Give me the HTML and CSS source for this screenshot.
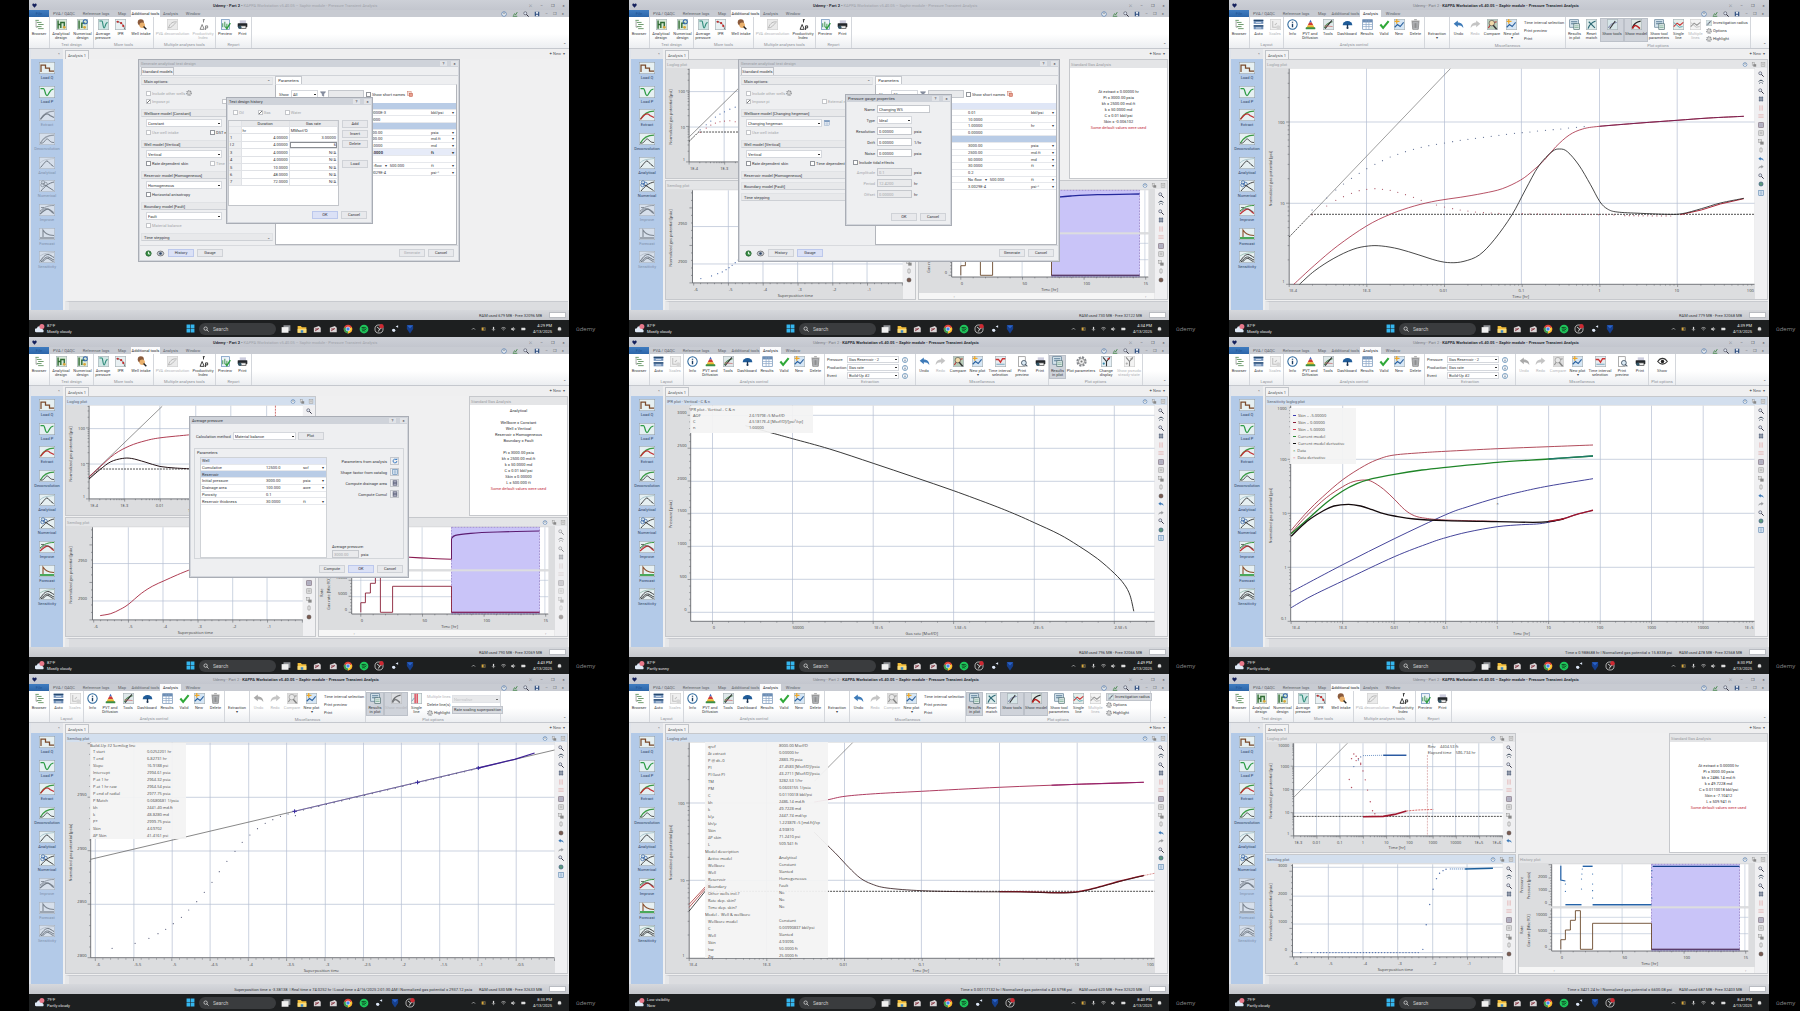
FILE: index.html
```html
<!DOCTYPE html>
<html lang="en">
<head>
<meta charset="utf-8">
<title>Pressure Transient Analysis - session overview</title>
<link rel="stylesheet" href="styles.css">
</head>
<body>
<main class="sheet" id="sheet"></main>
<script src="app.js"></script>
</body>
</html>
```
FILE: styles.css
```css
* { box-sizing: border-box; }
html, body { margin: 0; background: #000; }
body { font: 4px/5px Roboto, "Liberation Sans", sans-serif; color: #3a3d42; }
button, input, select { font: inherit; color: inherit; margin: 0; padding: 0; border: 0; background: none; }
button { white-space: nowrap; }
ul, dl, dd, h2, h3, p { margin: 0; padding: 0; list-style: none; font: inherit; }
svg { display: block; }

.sheet { display: grid; grid-template-columns: repeat(3, 1fr); grid-template-rows: repeat(3, 1fr); min-height: 100vh; }
.shot { display: flex; background: #000; padding-left: 29px; min-width: 0; }
.brand { width: 31px; align-self: flex-end; padding: 0 0 4px 7px; color: #8b8b8b; font: 6px/7px "Open Sans", sans-serif; }
.app { position: relative; flex: 1; min-width: 0; display: flex; flex-direction: column; background: #efeff0; }

.titlebar { position: relative; height: 10px; display: flex; align-items: center; justify-content: flex-end; gap: 6px; padding: 0 3px; background: linear-gradient(#cdd0d7, #c3c6ce); white-space: nowrap; }
.titlebar h2 { margin-right: auto; padding-left: 170px; color: #777a82; }
.titlebar h2 b { color: #2c2f37; }
.titlebar .dim b { color: #a0a3aa; font-weight: 400; }
.titlebar .dim { color: #2c2f37; font-weight: 700; }
.logo { width: 5px; height: 5px; color: #14205c; }
.winbtn { width: 5px; height: 5px; line-height: 5px; text-align: center; color: #4c5058; }

.tabs { height: 7px; display: flex; background: #c8cbd2; color: #5b5f67; }
.tabs button { height: 7px; line-height: 7px; }
.tabs .file { width: 20px; background: linear-gradient(#3f7cc0, #2c65a8); color: #1f5290; }
.tabs .on { background: #fbfbfc; color: #26282c; }
.tabs .quick { margin-left: auto; display: flex; align-items: center; gap: 5px; padding-right: 5px; }
.tabs .quick svg { width: 6px; height: 6px; }

.ribbon { height: 32px; display: flex; background: linear-gradient(#fff 55%, #eceef1); border-bottom: 1px solid #c5c8ce; }
.group { display: flex; flex-direction: column; border-right: 1px solid #d4d7dc; }
.group .items { display: flex; flex: 1; padding-top: 1px; }
.group h3 { height: 6px; text-align: center; color: #8f9298; white-space: nowrap; }
.tool { display: flex; flex-direction: column; align-items: center; line-height: 4px; height: 24px; padding-top: 1px; white-space: pre-line; text-align: center; color: #3a3c42; }
.tool svg { width: 11px; height: 11px; margin-bottom: 2px; }
.tool.off { color: #b4b6ba; }
.tool.off svg, .side .off svg { filter: grayscale(1); opacity: .6; }
.tool.hot { background: #cfd3da; border: 1px solid #bcc1c9; padding-top: 0; }
.w14 { width: 14px; } .w16 { width: 16px; } .w17 { width: 17px; } .w18 { width: 18px; } .w20 { width: 20px; }
.w21 { width: 21px; } .w22 { width: 22px; } .w24 { width: 24px; } .w26 { width: 26px; } .w30 { width: 30px; } .w37 { width: 37px; }
.stack { display: flex; flex-direction: column; align-items: flex-start; padding: 1px 0 0 2px; }
.stack button { height: 8px; line-height: 8px; display: flex; align-items: center; gap: 1px; color: #3a3c42; }
.stack svg { width: 6px; height: 6px; }
.stack.wide { width: 43px; } .stack.radius { width: 46px; } .stack.narrow { width: 25px; } .stack.scaling { width: 50px; gap: 3px; padding-top: 3px; }
.stack .off { color: #b4b6ba; }
.stack .pressed { background: #d8dbe0; border: 1px solid #c0c4cb; padding: 0 1px; }
.stack select { width: 48px; background-color: #dfe0e3; color: #a9abb0; }
.extract { width: 90px; padding: 1px 4px 0 2px; display: grid; grid-template-columns: 20px 52px auto; align-content: start; row-gap: 1px; align-items: center; }
.extract svg { width: 6px; height: 6px; justify-self: center; }
.extract select { height: 7px; }
.collapse { margin: auto 3px 1px auto; }

select { appearance: none; height: 8px; padding: 0 1px; border: 1px solid #d5d8dd; background: #fff; border-radius: 0; background-image: linear-gradient(#333, #333); background-repeat: no-repeat; background-size: 2px 1px; background-position: right 1px center; }
input[type=checkbox] { appearance: none; flex: none; width: 5px; height: 5px; border: 1px solid #92959b; background: #fff; }
input[type=checkbox]:disabled { border-color: #c4c6ca; }
input[type=checkbox]:checked { background: linear-gradient(135deg, #fff 35%, #777 35% 65%, #fff 65%); }
input[type=text] { height: 8px; border: 1px solid #c5c8cd; background: #fff; padding: 0 1px; min-width: 0; }
input[type=text]:disabled { background: #e9eaec; color: #a5a7ab; }

.body { flex: 1; display: flex; min-height: 0; }
.side { width: 34px; background: #b3cae8; border-left: 2px solid #dfe3ea; }
.side header { height: 10px; background: #e3e5e9; text-align: right; line-height: 10px; padding-right: 3px; }
.side li { height: 24px; }
.side li:nth-child(3n+2) { height: 23px; }
.side ul { padding-top: 3px; }
.side button { display: flex; flex-direction: column; align-items: center; width: 100%; color: #2c4264; line-height: 5px; }
.side .off { color: #7e90ab; }
.side svg { width: 16px; height: 12px; margin-bottom: 1px; }
.work { flex: 1; min-width: 0; padding: 0 1px 0 2px; display: flex; flex-direction: column; }
.docs { height: 10px; display: flex; justify-content: space-between; color: #5a5d63; padding-right: 3px; }
.docs button { height: 9px; margin-top: 1px; width: 24px; border: 1px solid #c2c5ca; border-bottom: 0; background: #f3f3f4; line-height: 7px; }
.docs span { line-height: 10px; }
.desk { flex: 1; display: flex; min-height: 0; background: #f0f0f1; }
.footline { height: 9px; margin-top: 1px; border-top: 1px solid #c8cacf; background: #dcdde0; border-left: 4px solid #e6e7e9; }
.status { height: 10px; display: flex; align-items: center; justify-content: flex-end; gap: 7px; padding-right: 3px; background: linear-gradient(#d6d8dc, #c6c8cd); color: #34363b; white-space: nowrap; }
.status meter { appearance: none; width: 17px; height: 6px; background: #fff; border: 1px solid #b9bcc2; }
.status meter::-webkit-meter-bar { display: none; }

.pane { display: flex; flex-direction: column; background: #dcdddf; border: 1px solid #c6c8cc; min-width: 0; min-height: 0; }
.pane > header { height: 8px; display: flex; align-items: center; justify-content: space-between; padding: 0 1px; background: #e4e5e7; color: #9a9ca1; line-height: 7px; }
.pane.active > header { background: #d3dfee; color: #59616d; }
.pane .ctl { display: flex; gap: 3px; }
.pane .ctl svg { width: 6px; height: 5px; }
.pane .view { flex: 1; display: flex; min-height: 0; }
.pane .canvas { position: relative; flex: 1; min-width: 0; }
.canvas > svg { width: 100%; height: auto; }
.strip { width: 12px; background: #f0f0f2; padding-top: 1px; flex: none; overflow: hidden; }
.strip li { height: 8px; display: grid; place-items: center; }
.strip li:nth-child(odd) { height: 9px; }
.strip svg { width: 6px; height: 6px; }
.strip.faded svg { opacity: .55; filter: grayscale(.7); }
.full { flex: 1; }
.quad { flex: 1; display: grid; grid-template-columns: 251px 2px 151px 1fr; grid-template-rows: 120px 1fr; row-gap: 1px; }
.quad .log { grid-area: 1 / 1; } .quad .semi { grid-area: 2 / 1; }
.quad .info { grid-area: 1 / 4; background: #fff; } .quad .hist { grid-area: 2 / 3 / auto / span 2; }
.info div { padding-top: 21px; text-align: center; line-height: 6px; color: #303236; white-space: pre-line; }
.info.tall div { padding-top: 3px; }
.info .warn { color: #c22a3c; }

.plot text { font: 4px "Open Sans", sans-serif; fill: #3d3f43; }
.plot .e { text-anchor: end; } .plot .m { text-anchor: middle; }
.g { stroke: #b4bfd2; } .ax { stroke: #55585d; } .tk { stroke: #66696e; }
.plot path { fill: none; }
.readout { position: absolute; background: #f3f3f3ee; font: 4px/7px "Open Sans", sans-serif; color: #4a4a4a; white-space: nowrap; overflow: hidden; }
.readout dl { display: grid; padding-left: 3px; }
.readout.ipr { left: 24px; top: 1px; width: 123px; height: 27px; }
.readout.ipr dl { grid-template-columns: 56px 1fr; line-height: 6px; }
.readout.semi { left: 24px; top: 1px; width: 96px; height: 96px; line-height: 5px; }
.readout.semi dl { grid-template-columns: 54px 1fr; line-height: 7px; }
.readout.model { left: 39px; top: 0; width: 123px; bottom: 15px; }
.readout.model dl { grid-template-columns: 71px 1fr; grid-auto-rows: 7px; }
.readout.model dt { padding-top: 1px; } .readout .head { grid-column: 1 / -1; margin-left: -3px; }
.readout.legend { left: 24px; top: 3px; width: 66px; height: 56px; padding: 4px 0 0 3px; }
.legend li { display: flex; align-items: center; gap: 2px; }
.legend i { width: 3px; height: 1px; background: currentColor; }
.legend span { color: #4a4a4a; }
.blue { color: #3b3bb0; } .wine { color: #8a2038; } .red { color: #d04050; } .green { color: #2c8a34; } .black { color: #111; }

.dialog { position: absolute; background: #eeeff1; border: 1px solid #a9adb5; box-shadow: inset 0 0 0 1px #d3d6dc; padding: 0 1px 1px; display: flex; flex-direction: column; color: #34363b; }
.dialog > header { height: 7px; display: flex; gap: 4px; align-items: center; background: #cfd3da; padding-left: 1px; flex: none; white-space: nowrap; }
.dialog > header h3 { margin-right: auto; }
.dialog.back > header h3 { color: #999ca2; }
.dialog > header button { width: 7px; height: 5px; line-height: 5px; background: #e1e3e7; }
.push { width: 26px; height: 8px; line-height: 6px; border: 1px solid #cfd2d7; background: #e8e9ec; text-align: center; }
.push.hot { background: #dbe1f6; border-color: #bcc8ec; }
.push:disabled { color: #a9abb0; }
.row { display: flex; align-items: center; height: 8px; gap: 2px; white-space: nowrap; }
label { display: flex; align-items: center; gap: 1px; white-space: nowrap; }
label.off { color: #a5a7ab; }
.design { left: 109px; top: 59px; width: 322px; height: 203px; }
.design .vtab { width: 33px; height: 8px; margin-left: 1px; border: 1px solid #bfc2c8; border-bottom: 0; line-height: 6px; flex: none; background: #f4f4f5; }
.design .cols { flex: 1; display: flex; gap: 2px; padding: 0 1px; border-top: 1px solid #d0d3d8; min-height: 0; }
.design .models { width: 132px; padding-top: 1px; }
.design .models h3 { height: 8px; line-height: 7px; padding: 0 2px; background: #e8e9eb; border: 1px solid #e0e2e5; border-bottom-color: #cdd0d5; display: flex; justify-content: space-between; }
.design section { padding-bottom: 3px; }
.design section > div { padding: 2px 3px 1px 5px; display: grid; row-gap: 1px; }
.design section:first-child > div { padding-top: 4px; row-gap: 0; }
.design section select { width: 76px; }
.design .models .row > label:first-child { width: 62px; }
.design .row .second { margin-left: 12px; }
.design .row svg { width: 6px; height: 6px; }
.params { flex: 1; display: flex; flex-direction: column; }
.params > button { width: 27px; height: 8px; background: #fff; border: 1px solid #c5c8cd; border-bottom: 0; line-height: 6px; }
.params .sheetbox { flex: 1; background: #fff; border: 1px solid #b3b6bc; border-top-color: #e2e4e8; min-height: 0; }
.params .row { height: 18px; padding-left: 3px; }
.params .row select { width: 27px; } .params .row input[type=text] { width: 36px; }
table { border-collapse: collapse; table-layout: fixed; width: 100%; }
th, td { padding: 0 1px; text-align: left; font-weight: 400; line-height: 5px; border-bottom: 1px solid #e6e8ec; overflow: hidden; white-space: nowrap; }
.params table.eleven { height: 73px; } .params table.thirteen { height: 87px; }
.c-name { width: 91px; } .c-unit { width: 21px; } .c-drop { width: 5px; }
.band td, .band th { background: #b9cce6; } .pale td, .pale th { background: #dfe6f6; } .strong td { font-weight: 700; background: #e6ebf8; }
.design footer { height: 15px; display: flex; align-items: center; gap: 3px; padding: 0 4px; border-top: 1px solid #d8dade; }
.design footer svg { width: 9px; height: 7px; }
.design footer .gap { margin-left: auto; }

.history { left: 197px; top: 97px; width: 147px; height: 127px; }
.history .row { height: 15px; padding-left: 5px; gap: 14px; flex: none; }
.history .grid2 { display: flex; gap: 3px; height: 86px; }
.history .box { width: 111px; background: #fff; border: 1px solid #c2c5ca; }
.history table { height: 65px; }
.history td, .history th { border: 1px solid #e0e2e6; border-width: 0 1px 1px 0; text-align: right; }
.history thead th { text-align: center; background: #e8e9eb; }
.history th:first-child { width: 12px; text-align: left; background: #eeeff1; }
.history .units td { text-align: left; }
.history .edit { box-shadow: inset 0 0 0 1px #8a8d92; }
.history .col { display: flex; flex-direction: column; gap: 2px; }
.history .col button:last-child { margin-top: 10px; }
.history > footer, .gauge > footer, .average > footer { margin-top: auto; display: flex; justify-content: flex-end; gap: 3px; padding: 0 4px 3px; }
.gauge { left: 216px; top: 94px; width: 107px; height: 132px; }
.gauge .fields { display: grid; grid-template-columns: 28px 35px 1fr; gap: 3px 2px; padding-top: 3px; align-items: center; }
.gauge .fields label { justify-self: end; }
.gauge .fields .name { grid-column: 2 / 4; width: 53px; }
.gauge .fields .tick { grid-column: 1 / 4; justify-self: start; padding-left: 6px; height: 5px; }
.average { left: 160px; top: 79px; width: 220px; height: 162px; }
.average .calc { height: 24px; padding-left: 5px; flex: none; }
.average .calc select { width: 63px; }
.average fieldset { margin: 0 3px; border: 1px solid #d3d6da; padding: 8px 4px 0 5px; min-width: 0; position: relative; }
.average .inner { display: flex; gap: 5px; height: 101px; }
.average legend { position: absolute; left: 2px; top: 1px; padding: 0; }
.average .box { width: 127px; background: #fff; border: 1px solid #cfd2d6; flex: none; }
.average table { height: 47px; }
.average .c-name { width: 64px; } .average .c-val { width: 37px; }
.average .acts { flex: 1; display: flex; flex-direction: column; gap: 3px; }
.average .acts p { display: flex; justify-content: flex-end; align-items: center; gap: 3px; height: 8px; white-space: nowrap; }
.average .acts button { width: 9px; height: 8px; border: 1px solid #c5c8cd; display: grid; place-items: center; }
.average .acts svg { width: 6px; height: 6px; }
.average .acts .out { margin-top: auto; display: grid; gap: 1px; }
.average .acts .out input { width: 27px; }

.taskbar { height: 17px; display: flex; align-items: center; background: #1d1f20; color: #e4e4e4; padding: 0 7px 0 6px; }
.weather { width: 151px; display: flex; gap: 2px; line-height: 6px; white-space: pre-line; }
.weather svg { width: 10px; height: 12px; }
.start { width: 9px; height: 9px; margin-right: 4px; }
.find { width: 77px; height: 12px; border-radius: 6px; background: #3a3c3e; display: flex; align-items: center; gap: 3px; padding-left: 4px; }
.find svg { width: 6px; height: 6px; }
.find input[type=text] { width: 60px; height: 10px; border: 0; background: none; font-size: 5px; }
.find input::placeholder { color: #c8c8c8; opacity: 1; }
.pins { width: 134px; margin-left: 5px; display: flex; justify-content: space-between; }
.pins svg { width: 10px; height: 10px; }
.tray { margin-left: auto; display: flex; align-items: center; gap: 5px; }
.tray svg { width: 5px; height: 6px; }
.tray time { text-align: right; line-height: 6px; white-space: pre-line; margin-left: 2px; }
```
FILE: app.js
```js
const X = v => Math.round(v / 2.6133 * 10) / 10;
const Y = v => Math.round(v / 3 * 10) / 10;

/* ---------- icons ---------- */
const box = (c = '#e8f0f2') => `<rect x=".5" y=".5" width="15" height="15" fill="${c}" stroke="#a9b4b8"/>`;
const ICONS = {
  browser: '<path d="M2 2h5M4 5h7M6 8h8M4 11h7M6 14h8" stroke="#6b9a6b" stroke-width="1.4"/><path d="M3 3v9h2" fill="none" stroke="#888"/>',
  anadesign: box('#d9ead9') + '<path d="M3 2v12M7 13V5h6M12 5v8M3 8h5" fill="none" stroke="#2e6a32" stroke-width="2"/><circle cx="12" cy="12" r="2" fill="#d9a53b"/>',
  numdesign: box('#d9ead9') + '<path d="M3 2v12M7 13V6h5" fill="none" stroke="#2e6a32" stroke-width="2"/><circle cx="12" cy="4" r="3" fill="none" stroke="#3568b0" stroke-width="1.5"/><circle cx="11" cy="12" r="2" fill="#d9a53b"/>',
  avg: box('#cfe6e4') + '<path d="M2 3h4c1 0 1 10 3 10s1-8 5-8" fill="none" stroke="#2d8a78" stroke-width="1.6"/>',
  ipr: box() + '<path d="M2 4c7 0 11 4 12 11" fill="none" stroke="#444"/><g fill="#c22c2c"><circle cx="4" cy="4" r="1.6"/><circle cx="9" cy="6" r="1.6"/><circle cx="12" cy="10" r="1.6"/></g>',
  intake: '<circle cx="7" cy="5" r="4.5" fill="#8a5a3c"/><circle cx="9" cy="9" r="4" fill="#e9b06c"/><path d="M11 11l4 4" stroke="#222" stroke-width="2"/>',
  deconv: box('#ddd') + '<path d="M2 13c3-8 7-9 12-9M2 13c5 0 7-4 11-8" fill="none" stroke="#888" stroke-width="1.4"/>',
  prod: '<path d="M7 1h3M8 1v4M3 15l3-7 3 7zM11 10v6M11 10h3v3h-3" fill="none" stroke="#333" stroke-width="1.4"/>',
  preview: '<rect x="2" y="1" width="12" height="14" fill="#eef4fa" stroke="#5e87b5"/><path d="M4 12V6M7 12V4M10 12V7" stroke="#4a9a5a" stroke-width="1.5"/><path d="M8 11l2 3 5-8" fill="none" stroke="#2b9b3c" stroke-width="2"/>',
  print: '<rect x="4" y="2" width="9" height="5" fill="#ccd"/><rect x="1" y="6" width="14" height="6" rx="1" fill="#23262b"/><rect x="5" y="10" width="8" height="4" fill="#eee" stroke="#444"/><circle cx="4" cy="12" r="2.5" fill="#356"/>',
  auto: '<rect x="1" y="1" width="14" height="6" fill="#6f8fb8"/><rect x="1" y="9" width="14" height="6" fill="#6f8fb8"/><path d="M1 2h14M1 10h14" stroke="#27496f" stroke-width="2"/><path d="M4 5h8M4 13h8" stroke="#fff"/>',
  scales: box('#e6e6e6') + '<path d="M4 3v9h9M7 9l3-3" fill="none" stroke="#999" stroke-width="1.5"/><circle cx="12" cy="12" r="3" fill="#bbb"/>',
  info: '<circle cx="8" cy="8" r="6.8" fill="#fff" stroke="#27649a" stroke-width="1.5"/><path d="M8 7v5M8 4v1.6" stroke="#1d3f66" stroke-width="2"/>',
  pvt: '<path d="M8 1l2 4H6z" fill="#3f62b8"/><path d="M6 5h4l2 4H4z" fill="#d23c34"/><path d="M4 9h8l2 4H2z" fill="#e9b62f"/><rect x="1" y="12" width="14" height="3" rx="1" fill="#3c8f46"/>',
  tools: box('#dfe8ea') + '<path d="M2 13C4 8 8 5 14 4" fill="none" stroke="#4a8a50" stroke-width="1.5"/><path d="M3 14L13 2" stroke="#333" stroke-width="1.6"/><path d="M2 10l12 1" stroke="#c66"/>',
  dash: '<path d="M1 9a7 6 0 0 1 14 0z" fill="#1f5b98"/><path d="M8 8v5" stroke="#1c3554" stroke-width="2"/><circle cx="8" cy="13" r="1.5" fill="#1c3554"/>',
  table: '<rect x="1" y="1" width="14" height="14" fill="#fff" stroke="#6c8db4"/><rect x="1" y="1" width="14" height="4" fill="#6c8db4"/><path d="M1 8h14M1 11h14M6 1v14M10 1v14" stroke="#8ba6c6"/>',
  calc: '<rect x="2" y="1" width="12" height="14" fill="#5a5f78"/><path d="M4 4h8M4 8h8M4 12h8" stroke="#dde" stroke-width="1.500"/>',
  valid: '<path d="M2 8l4 5 8-10" fill="none" stroke="#2fa838" stroke-width="3"/>',
  newp: box('#d6e6f4') + '<path d="M1 12l4-4 4 3 5-6" fill="none" stroke="#2b62a0" stroke-width="1.6"/><path d="M4 0v7M1 3.500h7" stroke="#eea82a" stroke-width="1.800"/>',
  del: '<path d="M3 4h10l-1 11H4z" fill="#bcbec2" stroke="#777"/><path d="M2 3h12M6 1h4M6 6v7M8 6v7M10 6v7" stroke="#777"/>',
  none: '',
  undo: '<path d="M1 7l6-5v3c5 0 8 3 8 8-2-3-4-4-8-4v3z" fill="#3d7ab8"/>',
  redo: '<path d="M15 7L9 2v3c-5 0-8 3-8 8 2-3 4-4 8-4v3z" fill="#9b9da1"/>',
  compare: box('#b9cdb9') + '<path d="M2 13c3-6 6-8 12-9" fill="none" stroke="#b33" stroke-width="1.5"/><circle cx="7" cy="6" r="4" fill="#f0d9a8" stroke="#555"/><path d="M9 9l5 6" stroke="#333" stroke-width="2"/>',
  results: '<rect x="1" y="1" width="13" height="11" fill="#d5e4ec" stroke="#5f7d94"/><path d="M3 4h9M3 7h9" stroke="#5a7c96" stroke-width="1.5"/><rect x="7" y="7" width="8" height="8" fill="#eef3f5" stroke="#4a6b6b"/><path d="M8 10h6M8 12.500h6" stroke="#5a9a78"/>',
  reset: box('#dcebea') + '<path d="M3 14C5 8 8 5 14 3M4 4l9 9" fill="none" stroke="#2f6a76" stroke-width="1.6"/>',
  showt: box('#d6e6e8') + '<path d="M2 13C4 8 8 6 14 5" fill="none" stroke="#669" stroke-width="1.2"/><path d="M4 14l8-11" stroke="#333" stroke-width="1.5"/>',
  showm: box('#dfe8e4') + '<path d="M2 13C4 6 8 4 14 3" fill="none" stroke="#222" stroke-width="2"/><path d="M2 14c3-7 6-5 11 0" fill="none" stroke="#b22" stroke-width="2.200"/>',
  single: box('#e6eeea') + '<path d="M1 11l5-5 4 3 5-4" fill="none" stroke="#c33" stroke-width="1.6"/><path d="M1 5l8 7 5-1" fill="none" stroke="#49a" stroke-width="1.2"/>',
  vline: box('#e9f2ee') + '<path d="M6 1v14M9 1v14" stroke="#d45" stroke-width="2"/><path d="M1 12l4-5" stroke="#48a"/>',
  timesel: box('#e7ecf0') + '<path d="M1 5h4l3 4 3-5h4" fill="none" stroke="#c33" stroke-width="2"/><path d="M2 12h12" stroke="#48a"/>',
  ppreview: '<rect x="2" y="1" width="10" height="14" fill="#fff" stroke="#888"/><circle cx="10" cy="10" r="3.5" fill="#dcebf6" stroke="#456" stroke-width="1.3"/><path d="M12 12l3 3" stroke="#456" stroke-width="1.500"/>',
  gear: '<circle cx="8" cy="8" r="6" fill="none" stroke="#85888e" stroke-width="3" stroke-dasharray="3 1.700"/><circle cx="8" cy="8" r="4.500" fill="#eee" stroke="#777"/><circle cx="8" cy="8" r="1.500" fill="#777"/>',
  change: box('#e4eef4') + '<path d="M3 2l5 6 5-6M8 8v7" fill="none" stroke="#333" stroke-width="1.6"/><circle cx="11" cy="4" r="1.600" fill="#c33"/><circle cx="4" cy="11" r="1.600" fill="#38a"/>',
  eye: '<path d="M1 8c4-6 10-6 14 0-4 5-10 5-14 0z" fill="#fff" stroke="#333" stroke-width="1.6"/><circle cx="8" cy="8" r="2.500" fill="#222"/>',
  mag: '<circle cx="6" cy="6" r="4" fill="#dfe8f2" stroke="#556" stroke-width="1.8"/><path d="M9 9l6 6" stroke="#223" stroke-width="2.500"/>',
  hand: '<path d="M2 7c2-5 10-5 12 0M4 12l2-3M12 12l-2-3" fill="none" stroke="#345" stroke-width="2.600"/>',
  arrows: '<path d="M5 1v14M11 1v14M2 5h12M2 11h12" stroke="#223656" stroke-width="1.800"/>',
  vred: '<path d="M5 1v14M11 1v14" stroke="#d99" stroke-width="1.800"/>',
  hred: '<path d="M1 5h14M1 11h14" stroke="#d99" stroke-width="1.800"/>',
  sq: '<rect x="2" y="2" width="12" height="12" fill="#ccd" stroke="#767" stroke-width="2"/><path d="M8 2v12M2 8h12" stroke="#778"/>',
  sq2: '<rect x="2" y="2" width="12" height="12" fill="#ddd" stroke="#999" stroke-width="1.500"/><path d="M5 6h6M5 9h6" stroke="#888"/>',
  copy: '<rect x="2" y="2" width="8" height="8" fill="#ddd" stroke="#777"/><rect x="6" y="7" width="9" height="8" fill="#888"/>',
  copyred: '<rect x="1" y="1" width="10" height="11" fill="#f6dcd4" stroke="#c0604a"/><rect x="6" y="6" width="9" height="9" fill="#e8a090" stroke="#b0402c"/>',
  funnel: '<path d="M1 2h14l-5 6v6l-4-2V8z" fill="#8c93a4" stroke="#4f5870"/>',
  pin: '<rect x="5" y="2" width="6" height="12" rx="3" fill="#eee" stroke="#888" stroke-width="1.500"/>',
  ball: '<circle cx="8" cy="8" r="5.500" fill="#7a5a50" stroke="#333"/>',
  globe: '<circle cx="8" cy="8" r="5.500" fill="#5c9a7c" stroke="#2a4a7a" stroke-width="1.500"/>',
  page: '<rect x="2" y="1" width="12" height="14" fill="#dce8f4" stroke="#4a7aaa" stroke-width="1.500"/><path d="M5 5h6M5 8h6M5 11h6" stroke="#4a7aaa"/>',
  help: '<circle cx="8" cy="8" r="6" fill="#fff" stroke="#3d6da5" stroke-width="1.800"/><path d="M8 4v5" stroke="#234" stroke-width="2"/>',
  save: '<path d="M2 2h12v12H2z" fill="#2b4a7c"/><path d="M5 2h6v5H5zM5 10h6v4H5z" fill="#dfe6f0"/>',
  chart: '<path d="M2 14h12M4 12l3-5 3 3 4-7" fill="none" stroke="#4b8a50" stroke-width="2.500"/>',
  heart: '<path d="M8 15L1 7c-1-5 5-7 7-3 2-4 8-2 7 3z" fill="#14205c"/>',
  recycle: '<circle cx="8" cy="8" r="6" fill="#3b9447" stroke="#1e5c28" stroke-width="2"/><path d="M8 4v5h4" fill="none" stroke="#fff" stroke-width="2"/>',
  refresh: '<path d="M13 8a5 5 0 1 1-2-4" fill="none" stroke="#3a7ac0" stroke-width="2.500"/><path d="M9 5h5V0z" fill="#3a7ac0"/>',
  cam: '<ellipse cx="8" cy="8" rx="7.500" ry="5.500" fill="#c9cdd4" stroke="#555" stroke-width="1.500"/><circle cx="8" cy="8" r="3" fill="#2f4668"/>',
  win: '<path d="M1 1h6.500v6.500H1zM8.500 1H15v6.500H8.500zM1 8.500h6.500V15H1zM8.500 8.500H15V15H8.500z" fill="#35b6ee"/>',
  weather: '<path d="M2 13a3 3 0 0 1 1-6 4 4 0 0 1 8 1 3 3 0 0 1 2 5z" fill="#dfe9f6"/><circle cx="11" cy="4" r="4" fill="#e8788a"/>',
  desk2: '<rect x="4" y="2" width="11" height="9" fill="#8d9094"/><rect x="1" y="5" width="11" height="9" fill="#f0f0f0"/>',
  folder: '<path d="M1 3h5l2 2h7v9H1z" fill="#f2bd3a"/><path d="M1 8h14v6H1z" fill="#f9dc7c"/><rect x="6" y="10" width="4" height="4" fill="#3a87c8"/>',
  pdf: '<path d="M3 6l8-3 3 3v7H3z" fill="#d9d4d6"/><path d="M5 11l6-4M5 8h5" stroke="#8a3a44" stroke-width="1.600"/>',
  chrome: '<circle cx="8" cy="8" r="7" fill="#e2443a"/><path d="M8 8L2 5a7 7 0 0 0 6 10z" fill="#33a250"/><path d="M8 8v7a7 7 0 0 0 6-10z" fill="#f5c32c"/><circle cx="8" cy="8" r="3.200" fill="#4486ee" stroke="#fff"/>',
  spotify: '<circle cx="8" cy="8" r="7" fill="#1fc75c"/><path d="M4 6c3-1 6-1 8 1M4.500 8.500c2-1 5-1 7 1M5 11c2-.6 4-.4 5 .6" fill="none" stroke="#0c2c16" stroke-width="1.300"/>',
  obs: '<circle cx="8" cy="8" r="6.500" fill="#222" stroke="#ddd" stroke-width="1.200"/><path d="M5 5l4 3-2 4M9 8l3-1" stroke="#ddd" fill="none" stroke-width="1.500"/><circle cx="12" cy="3.500" r="3.500" fill="#cf2a33"/>',
  kappa: '<path d="M3 9l3-1 1 5zM9 4l4-2v4z" fill="#dfe9f8"/><circle cx="6" cy="10" r="2.500" fill="#dfe9f8"/>',
  saphir: '<path d="M3 2h10v6l-5 7-5-7z" fill="#163f8c"/><path d="M3 2h10l-5 5z" fill="#2a62c8"/>',
  up: '<path d="M3 10l5-5 5 5" fill="none" stroke="#ddd" stroke-width="2"/>',
  shield: '<path d="M2 3h12v10H2z" fill="#d8a83a"/><path d="M8 3h6v10H8z" fill="#444"/>',
  mic: '<rect x="6" y="1" width="4" height="9" rx="2" fill="#ddd"/><path d="M3 8c1 5 9 5 10 0M8 12v3" fill="none" stroke="#ddd" stroke-width="1.500"/>',
  wifi: '<path d="M1 6c4-4 10-4 14 0M4 9c2-2 6-2 8 0M7 12h2" fill="none" stroke="#ddd" stroke-width="2"/>',
  vol: '<path d="M1 6h3l4-4v12l-4-4H1zM11 5c2 2 2 4 0 6" fill="#ddd" stroke="#ddd"/>',
  bat: '<rect x="1" y="4" width="12" height="8" fill="#ddd"/><path d="M14 6v4" stroke="#ddd" stroke-width="2"/>',
  bell: '<path d="M3 12V7c0-6 10-6 10 0v5zM6 14h4" fill="#ddd" stroke="#ddd"/>',
  search: '<circle cx="7" cy="7" r="4.500" fill="none" stroke="#ddd" stroke-width="2"/><path d="M10 10l5 5" stroke="#ddd" stroke-width="2"/>'
};
const ic = n => `<svg viewBox="0 0 16 16" aria-hidden="true">${ICONS[n]}</svg>`;

const SIDE = [
  ['Load Q', '<path d="M4 20V6h9v6h8v6h9" fill="none" stroke="#7b4a2c" stroke-width="2.500"/>'],
  ['Load P', '<path d="M3 5h6c3 0 3 14 7 14s4-12 13-13" fill="none" stroke="#2e9c46" stroke-width="2.500"/>'],
  ['Extract', '<path d="M3 20C9 10 18 4 30 4" fill="none" stroke="#3a9a44" stroke-width="2.500"/><path d="M3 21C12 8 17 8 22 13l8 4" fill="none" stroke="#c22f34" stroke-width="2.500"/>'],
  ['Deconvolution', '<path d="M3 20C9 8 18 4 30 4" fill="none" stroke="#3a9a44" stroke-width="2.500"/><path d="M2 20c9 3 11-10 15-8s6 8 13 7" fill="none" stroke="#444" stroke-width="1.800"/>'],
  ['Analytical', '<path d="M2 12C9 4 18 5 30 3" fill="none" stroke="#9bbcc4" stroke-width="1.500"/><path d="M3 21c8-9 10-13 13-13s5 6 13 11" fill="none" stroke="#3a3c3e" stroke-width="2"/>'],
  ['Numerical', '<g fill="none" stroke="#3c68a8" stroke-width="1.500"><circle cx="8" cy="5" r="3.500"/><circle cx="13" cy="8" r="3.500"/><circle cx="7" cy="10" r="3.500"/></g><path d="M4 22C12 12 20 6 30 4M12 10l17 11" fill="none" stroke="#444" stroke-width="2"/>'],
  ['Improve', '<path d="M2 14C10 6 18 3 30 3" fill="none" stroke="#3a9a44" stroke-width="2"/><path d="M2 20c8-8 12-10 16-10s6 6 12 9" fill="none" stroke="#c22f34" stroke-width="2.500"/><path d="M3 16c8-10 14-8 26 0M4 7h6" fill="none" stroke="#444" stroke-width="1.500"/>'],
  ['Forecast', '<path d="M8 19V4c4 6 8 10 22 11" fill="none" stroke="#8a4f2c" stroke-width="2.200"/><path d="M2 20h28" stroke="#49a85a" stroke-width="4"/>'],
  ['Sensitivity', '<path d="M2 21C10 9 14 7 18 7s8 4 12 6M4 22c8-10 11-10 14-10s8 5 12 6M7 22c6-7 8-7 11-7s6 5 11 6" fill="none" stroke="#3a3c3e" stroke-width="2"/><path d="M2 10C10 4 18 4 30 3" fill="none" stroke="#7a9" stroke-width="1.200"/>']
];
const side = off => SIDE.map(([n, p], i) => `<li><button class="${off.includes(i) ? 'off' : ''}"><svg viewBox="0 0 32 24" aria-hidden="true"><rect x=".5" y=".5" width="31" height="23" fill="#e6f0f2" stroke="#8f9aa2"/>${p}</svg>${n}</button></li>`).join('');

/* ---------- ribbon ---------- */
const tool = (n, icon, w, cls = '') => `<button class="tool w${w} ${cls}">${ic(icon)}${n}</button>`;
const group = (name, html) => `<div class="group"><div class="items">${html}</div><h3>${name}</h3></div>`;
const sel = (opts, label, attr = '') => `<select aria-label="${label}" ${attr}><option>${opts}</option></select>`;
const browser = group('', tool('Browser', 'browser', 20));

function toolsRibbon(prodOff) {
  return browser +
    group('Test design', tool('Analytical\ndesign', 'anadesign', 22) + tool('Numerical\ndesign', 'numdesign', 21)) +
    group('More tools', tool('Average\npressure', 'avg', 18) + tool('IPR', 'ipr', 17) + tool('Well intake', 'intake', 24)) +
    group('Multiple analyses tools', tool('PVA deconvolution', 'deconv', 37, 'off') + tool('Productivity\nIndex', 'prod', 24, prodOff ? 'off' : '')) +
    group('Report', tool('Preview', 'preview', 18) + tool('Print', 'print', 17));
}
const analysisHead = browser +
  group('Layout', tool('Auto', 'auto', 17) + tool('Scales', 'scales', 16, 'off')) +
  group('Analysis control', tool('Info', 'info', 17) + tool('PVT and\nDiffusion', 'pvt', 18) + tool('Tools', 'tools', 18) + tool('Dashboard', 'dash', 20) + tool('Results', 'table', 20) + tool('Valid', 'valid', 14) + tool('New', 'newp', 16) + tool('Delete', 'del', 17));
const miscShort = cmp => group('', tool('Extraction\n▾', 'none', 24)) +
  group('Miscellaneous', tool('Undo', 'undo', 17, cmp === 2 ? 'off' : '') + tool('Redo', 'redo', 16, 'off') + tool('Compare', 'compare', 18, cmp ? 'off' : '') + tool('New plot\n▾', 'newp', 21) +
    '<div class="stack wide"><button>Time interval selection</button><button>Print preview</button><button>Print</button></div>');
const extraction = group('Extraction', `<div class="extract">
  <span>Pressure</span>${sel('Gas Reservoir - 2', 'Pressure')}${ic('info')}
  <span>Production</span>${sel('Gas rate', 'Production')}${ic('info')}
  <span>Event</span>${sel('Build-Up #2', 'Event')}${ic('info')}</div>`);
const miscLong = off => group('Miscellaneous', tool('Undo', 'undo', 16, off) + tool('Redo', 'redo', 17, 'off') + tool('Compare', 'compare', 18, off) + tool('New plot\n▾', 'newp', 21) + tool('Time interval\nselection', 'timesel', 24) + tool('Print\npreview', 'ppreview', 20) + tool('Print', 'print', 16));
const loglogRibbon = (hot, cmp) => analysisHead + miscShort(cmp) + group('Plot options',
  tool('Results\nin plot', 'results', 17, hot) + tool('Reset\nmatch', 'reset', 17) + tool('Show tools', 'showt', 24, 'hot') + tool('Show model', 'showm', 24, 'hot') + tool('Show tool\nparameters', 'results', 22) + tool('Single\nline', 'single', 17) + tool('Multiple\nlines', 'single', 17, 'off') +
  `<div class="stack radius"><button class="${hot ? 'pressed' : ''}">${ic('showt')}Investigation radius</button><button>${ic('gear')}Options</button><button>${ic('gear')}Highlight</button></div>`);
const iprRibbon = analysisHead + extraction + miscLong('') + group('Plot options', tool('Results\nin plot', 'results', 17, 'hot') + tool('Plot parameters', 'gear', 30) + tool('Change\ndisplay', 'change', 20) + tool('Show pseudo\nsteady-state', 'change', 26, 'off'));
const sensRibbon = analysisHead + extraction + miscLong('off') + group('Plot options', tool('Show', 'eye', 26));
const semiRibbon = analysisHead + miscShort(2) + group('Plot options', tool('Results\nin plot', 'results', 18, 'hot') + tool('Show model', 'showm', 24, 'hot off') + tool('Single\nline', 'vline', 17) +
  `<div class="stack narrow"><button class="off">Multiple lines</button><button>Delete line(s)</button><button>${ic('gear')}Highlight</button></div><div class="stack scaling">${sel('Normalise', 'Normalise', 'disabled')}<button class="pressed">Rate scaling superposition</button></div>`);

/* ---------- plots ---------- */
const smooth = pts => {
  const p = pts.map(([a, b]) => [X(a), Y(b)]);
  let d = `M${p[0]}`;
  for (let i = 0; i < p.length - 1; i++) {
    const a = p[i - 1] || p[i], b = p[i], c = p[i + 1], e = p[i + 2] || c;
    const k = (m, n, q, s) => (m + (q - n) / 6 * s).toFixed(2);
    d += `C${k(b[0], a[0], c[0], 1)} ${k(b[1], a[1], c[1], 1)} ${k(c[0], b[0], e[0], -1)} ${k(c[1], b[1], e[1], -1)} ${c}`;
  }
  return d;
};
const pairs = s => s.trim().split(/\s+/).map(t => t.split(',').map(Number));
const curve = (s, col, w = 0.8) => `<path d="${smooth(pairs(s))}" stroke="${col}" stroke-width="${w}"/>`;
const poly = (s, col, w = 0.8, dash = '') => `<path d="M${pairs(s).map(([a, b]) => X(a) + ' ' + Y(b)).join('L')}" stroke="${col}" stroke-dasharray="${dash}" stroke-width="${w}"/>`;
const dots = (s, col, r = 0.6) => pairs(s).map(([a, b]) => `<circle cx="${X(a)}" cy="${Y(b)}" r="${r}" fill="${col}"/>`).join('');
const run = (x0, y0, x1, y1, step) => { let s = ''; for (let x = x0; x <= x1; x += step) s += `${x},${y0 + (y1 - y0) * (x - x0) / (x1 - x0)} `; return s; };
const txt = (x, y, t, c = 'm') => `<text class="${c}" x="${X(x)}" y="${Y(y) + 1.5}">${t}</text>`;
const vtxt = (x, y, t) => `<text class="m" transform="translate(${X(x) + 1.5} ${Y(y)}) rotate(-90)">${t}</text>`;
const rect = (x0, y0, x1, y1, f, extra = '') => `<rect x="${X(x0)}" y="${Y(y0)}" width="${X(x1 - x0)}" height="${Y(y1 - y0)}" fill="${f}" ${extra}/>`;
function ticks(from, to, step, log, axis, pos) {
  let d = '';
  const n = Math.ceil(Math.abs(to - from) / Math.abs(step));
  for (let i = 0; i <= n; i++) for (let k = 1; k < 10; k++) {
    const v = from + step * (i + (log ? Math.log10(k) : (k - 1) / 5));
    if (!log && k > 5) break;
    if ((v - to) * Math.sign(step) > 0 || (v - from) * Math.sign(step) < 0) continue;
    const len = k === 1 ? 8 : 4;
    d += axis === 'x' ? `M${X(v)} ${Y(pos)}v${Y(len)}` : `M${X(pos)} ${Y(v)}h${-X(len)}`;
  }
  return `<path class="tk" d="${d}" stroke-width=".6"/>`;
}
function area(x0, y0, x1, y1, vs, hs) {
  return rect(x0, y0, x1, y1, '#fff') +
    `<path class="g" stroke-width=".7" d="${vs.map(v => `M${X(v)} ${Y(y0)}V${Y(y1)}`).join('')}${hs.map(h => `M${X(x0)} ${Y(h)}H${X(x1)}`).join('')}"/>` +
    `<path class="ax" stroke-width=".8" d="M${X(x0)} ${Y(y0)}V${Y(y1)}H${X(x1)}"/>`;
}
const plot = (box, html) => `<svg class="plot" viewBox="${box}" role="img" aria-label="Plot">${html}</svg>`;
const FULL = '66 68 489 231';
const labelsX = (s, y) => s.map(([x, t]) => txt(x, y, t)).join('');
const labelsY = (s, x) => s.map(([y, t]) => txt(x, y, t, 'e')).join('');
const NORM = 'Normalized gas potential [psi]';
const logX = [[243, '1E-4'], [435, '1E-3'], [636, '0.01'], [840, '0.1'], [1044, '1'], [1246, '10'], [1438, '100']];

const plot3 = plot(FULL, area(233, 206, 1449, 853, [435, 639, 840, 1044, 1247], [366, 610]) +
  ticks(233, 1449, 203, true, 'x', 853) + ticks(853, 206, -243.5, true, 'y', 233) +
  labelsX(logX, 871) + labelsY([[366, '100'], [610, '10'], [845, '1']], 221) + txt(838, 889, 'Time [hr]') + vtxt(183, 536, NORM) +
  poly('290,643 654,206', '#777', .7) + poly('233,711 290,643', '#222', .8, '2 1') + poly('290,643 1449,643', '#222', .8, '2 1') +
  dots('293,630 331,594 355,570 375,552 396,535 416,520 436,506 457,493 477,482 497,471 517,463 537,455 558,448 578,442 598,437 618,433 639,429 660,425 680,421 700,418 720,415 741,412 761,409 781,406 801,403 822,400 842,398 862,396 882,393 903,391 923,389 943,387 963,384 984,382 1004,380', '#5c6c90') +
  dots('293,645 331,618 355,601 375,590 396,580 416,572 436,568 457,566 477,568 497,571 517,577 537,584 558,592 578,601 618,615 639,621 660,626 680,630 700,633 720,636 741,638 761,639 781,640 ' + run(842, 641, 1100, 645, 20) + run(1110, 647, 1240, 648, 12), '#a85464') +
  curve('245,853 300,795 360,737 435,678 497,643 560,618 620,602 680,592 740,580 790,566 838,540 870,512 900,480 930,440 965,405 1000,387 1044,379 1150,369 1247,361 1330,354 1421,349', '#a5273f', .8) +
  curve('1044,379 1150,369 1247,361 1330,354 1421,349', '#7c2050', 1) +
  poly('1255,644 1310,630 1360,612 1421,596', '#b0283a', 1) +
  curve('260,853 300,812 350,775 400,748 440,738 475,738 520,747 570,764 620,782 655,788 690,784 730,765 770,718 815,645 850,570 885,498 920,455 940,447 960,455 990,495 1020,553 1045,605 1065,627 1090,636 1150,640 1220,643 1260,641 1310,626 1360,609 1421,595', '#1b1b1b', .8));

const plot5 = plot(FULL, area(237, 206, 1449, 853, [294, 503, 714, 924, 1135, 1344], [235, 334, 433, 529, 628, 727, 826]) +
  ticks(294, 1449, 210, false, 'x', 853) + ticks(826, 206, -98.5, false, 'y', 237) +
  labelsX([[298, '0'], [518, '50000'], [728, '1E+5'], [941, '1.5E+5'], [1147, '2E+5'], [1361, '2.5E+5']], 871) +
  labelsY([[227, '3000'], [325, '2500'], [424, '2000'], [521, '1500'], [620, '1000'], [719, '500'], [818, '0']], 226) +
  txt(841, 889, 'Gas rate [Mscf/D]') + vtxt(183, 532, 'Pressure [psia]') +
  curve('380,266 456,290 503,305 600,336 714,379 820,420 924,461 1030,506 1090,534 1135,557 1200,592 1250,626 1300,665 1344,709 1370,742 1385,775 1395,823', '#222', .9));

const plot6 = plot(FULL, area(237, 206, 1449, 853, [373, 508, 642, 777, 911, 1046, 1180, 1315], [367, 529, 691]) +
  ticks(238, 1449, 134.6, true, 'x', 853) + ticks(853, 206, -162, true, 'y', 237) +
  labelsX([[250, '1E-4'], [373, '1E-3'], [508, '0.01'], [641, '0.1'], [777, '1'], [911, '10'], [1045, '100'], [1180, '1000'], [1315, '10000'], [1435, '1E+5']], 871) +
  labelsY([[214, '1000'], [367, '100'], [529, '10'], [691, '1'], [843, '0.1']], 226) + txt(840, 889, 'Time [hr]') + vtxt(183, 536, NORM) +
  curve('238,765 373,683 508,605 642,533 700,509 777,482 840,464 911,447 1027,425', '#30308e', .9) +
  curve('238,812 290,778 373,732 508,659 600,618 642,602 700,585 777,569 840,563 880,561 911,556 950,545 985,532 1027,520', '#30308e', .9) +
  curve('238,580 280,525 320,480 373,428 430,386 470,365 508,354 580,347 642,343 777,335 911,329 1027,324', '#a83848', .9) +
  curve('238,588 280,535 330,482 373,449 400,434 430,429 450,434 480,457 508,487 535,518 560,536 590,544 642,549 777,553', '#a83848', .9) +
  curve('238,590 290,538 330,497 373,462 410,440 450,425 508,412 580,399 642,391 777,376 911,366 1027,357', '#1f8528', 1.3) +
  curve('911,366 960,362 1027,357', '#1f7a6a', 1.3) +
  curve('238,598 280,553 320,523 350,507 388,502 420,507 450,518 480,530 508,537 560,546 642,551 777,554 870,556 911,554 950,546', '#140a0c', 1.3) +
  curve('911,553 950,545 985,532 1027,520', '#a01528', 1.4) + txt(778, 498, '×'));

const cross = (x, y) => poly(`${x - 6},${y} ${x + 6},${y}`, '#3527a0', 1) + poly(`${x},${y - 6} ${x},${y + 6}`, '#3527a0', 1);
const plot7 = plot(FULL, area(237, 206, 1449, 851, [249, 350, 450, 549, 650, 749, 850, 950, 1049, 1149, 1250, 1349], [210, 370, 531, 691]) +
  ticks(249, 1449, 100, false, 'x', 853) + ticks(851, 206, -160.5, false, 'y', 237) +
  labelsX([[257, '-6'], [360, '-5.5'], [456, '-5'], [560, '-4.5'], [656, '-4'], [760, '-3.5'], [856, '-3'], [960, '-2.5'], [1056, '-2'], [1160, '-1.5'], [1257, '-1'], [1360, '-0.5']], 871) +
  labelsY([[362, '2950'], [523, '2900'], [683, '2850'], [843, '2800']], 226) + txt(840, 889, 'Superposition time') + vtxt(183, 536, 'Normalized gas potential [psia]') +
  poly('237,556 1449,228', '#555', .7) + poly('770,412 1250,282', '#6a58b4', .7) + poly('1250,282 1345,256 1397,237', '#3d1f96', 1.3) +
  dots('293,823 353,808 389,793 413,779 433,766 453,749 474,730 493,708 514,683 534,655 554,625 573,593 593,562 614,532 633,505 653,483 673,464 693,448 713,437 733,427 753,420 772,425 ' + run(793, 408, 1240, 286, 20), '#555a78', .6) +
  cross(770, 412) + cross(1091, 325) + cross(1250, 282));

const plot8 = plot(FULL, area(233, 206, 1449, 853, [435, 639, 840, 1044, 1247], [387, 619]) +
  ticks(233, 1449, 203, true, 'x', 853) + ticks(853, 206, -233, true, 'y', 233) +
  labelsX(logX, 871) + labelsY([[387, '100'], [619, '10'], [845, '1']], 221) + txt(838, 889, 'Time [hr]') + vtxt(183, 536, NORM) +
  poly('560,322 660,206', '#777', .7) + poly('280,652 1449,652', '#222', .8, '2 1') +
  poly('233,711 290,630', '#222') + poly('233,700 290,625', '#a33') + poly('233,691 290,620', '#a33') +
  curve('560,384 596,377 640,367 720,359 840,352 1044,340 1247,331 1421,325', '#a5274f', .9) + curve('1180,334 1247,331 1421,325', '#95206a', 1.1) +
  poly('1390,612 1449,598', '#c66', .7, '2 1') + curve('1044,653 1100,653 1200,656 1250,653 1300,640 1360,621 1421,604', '#a01828', 1.3) +
  curve('560,475 596,516 620,543 650,580 680,612 710,630 750,642 840,650 960,653 1100,654 1200,657 1250,654 1300,641 1360,622 1421,605', '#2b1214', .8));

const LOGBOX = '66 68 238 111', SEMIBOX = '66 189 238 110', HISTBOX = '319 189 236 110';
function logSmall(kind) {
  let s = area(233, 206, 794, 487, [325, 419, 513, 605, 699], [275, 382]) + ticks(233, 794, 93.5, true, 'x', 487) + ticks(487, 206, -107, true, 'y', 233) +
    labelsX([[246, '1E-4'], [325, '1E-3'], [418, '0.01']], 506) + labelsY([[275, '100'], [382, '10'], [479, '1']], 222) + vtxt(184, 352, NORM) + txt(515, 523, 'Time [hr]') +
    poly('262,397 795,397', '#222', .8, '2 1') + poly('233,425 262,392', '#222', .9, '2 1');
  if (kind === 2) s += poly('233,412 370,257', '#666', .7) + dots('262,390 278,375 290,364 302,352 314,343 326,336 340,328 354,322', '#4a6aa8') + dots('262,398 278,385 290,376 302,370 314,366 326,364 340,363 354,366', '#b44a5c');
  else s += poly('233,420 425,208', '#666', .7) + curve('233,420 262,390 300,352 340,327 380,312 419,303 495,294', '#a5273f', .9) + curve('233,427 262,398 290,375 320,365 345,365 380,376 419,389 460,394 495,396', '#221014', 1) + poly('722,206 722,260', '#b33', .7, '2 1');
  return plot(LOGBOX, s);
}
const log9 = plot(LOGBOX, area(245, 208, 794, 487, [305, 366, 427, 488, 549, 610, 670, 731], [278, 348, 418]) + ticks(245, 794, 61, true, 'x', 487) + ticks(487, 208, -70, true, 'y', 245) +
  labelsX([[257, '1E-3'], [305, '0.01'], [366, '0.1'], [427, '1'], [488, '10'], [549, '100'], [610, '1000'], [670, '10000'], [731, '1E+5'], [778, '1E+6']], 506) +
  labelsY([[215, '10000'], [278, '1000'], [348, '100'], [418, '10'], [479, '1']], 234) + txt(516, 523, 'Time [hr]') + vtxt(184, 352, NORM) +
  poly('245,371 386,208', '#777', .7) + poly('245,428 794,428', '#222', .8, '2 1') + poly('427,245 480,244', '#4a7ab8', .8, '1 1') + poly('480,244 541,244', '#1c4f9c', 1.4) +
  poly('596,243 596,487', '#c88', .6, '2 1') + poly('427,429 480,428 510,422 541,412', '#a01830', 1.6) + poly('541,412 570,409 612,407', '#c44', .8, '2 1') +
  dots('397,341 391,317 397,254 403,240 409,247 409,260 415,254 421,268 421,272 427,291 433,318 439,349 446,384 452,411 458,420', '#b44a5c', .7) + dots('403,278 415,258 421,249', '#4a6aa8', .6) +
  txt(597, 218, 'Rinv = 4404.53 ft', '') + txt(597, 236, 'Elapsed time = 586.734 hr', ''));
function semiSmall(kind) {
  const h = kind === 9 ? [580, 667, 751, 837] : [680, 793];
  let s = area(242, 571, 794, 850, [336, 427, 518, 610, 700], h) + ticks(245, 794, 91.300, false, 'x', 850) + ticks(850, 571, kind === 9 ? -86 : -113, false, 'y', 242) +
    labelsX([[251, '-6'], [342, '-5'], [433, '-4'], [524, '-3'], [615, '-2'], [706, '-1']], 869) + txt(512, 887, 'Superposition time') + vtxt(184, 715, 'Normalized gas potential [psia]') +
    labelsY(kind === 9 ? [[575, '3000'], [659, '2000'], [744, '1000'], [829, '0']] : [[672, '2950'], [785, '2900']], 228);
  if (kind === 2) s += dots('264,837 292,829 308,822 320,817 330,810 338,804 346,797 354,789 362,781', '#4a6aa8');
  if (kind === 4) s += curve('262,837 290,831 315,818 336,803 370,770 400,748 430,732 465,714 495,700', '#a5273f', .9);
  if (kind === 9) s += dots('264,837 292,837 ' + run(308, 837, 578, 837, 8) + '584,827 593,753 602,692 611,646 620,614 628,598 637,590 645,586', '#4a6aa8', .7) + poly('655,585 700,585', '#4a7ab8', 1, '1 1') + poly('695,585 768,583', '#1c5f9c', 1.4);
  return plot(SEMIBOX, s);
}
function hist(kind) {
  const c = kind === 4 ? '#8a2038' : '#6b4a2c';
  let s = rect(919, 571, 1433, 697, '#fff') + rect(919, 703, 1433, 831, '#fff') + `<path class="g" stroke-width=".6" d="${[943, 1103, 1263, 1424].map(v => `M${X(v)} ${Y(571)}V${Y(831)}`).join('')}M${X(919)} ${Y(730)}H${X(1433)}M${X(919)} ${Y(779)}H${X(1433)}"/>` +
    rect(1180, 571, 1410, 831, '#c9c4f8', 'stroke="#6a4ab0" stroke-width=".5" stroke-dasharray="2 1"') + rect(831, 697, 1433, 703, '#dcdddf') +
    `<path class="ax" stroke-width=".8" d="M${X(919)} ${Y(571)}V${Y(697)}M${X(919)} ${Y(703)}V${Y(831)}H${X(1433)}"/>` +
    ticks(943, 1433, 161, false, 'x', 831) + ticks(826, 703, -48, false, 'y', 919) + ticks(692, 571, -40, false, 'y', 919) +
    labelsX([[946, '0'], [1110, '50'], [1272, '100'], [1426, '15']], 850) + labelsY([[720, '10000'], [769, '5000'], [818, '0']], 907) + txt(1175, 869, 'Time [hr]') + vtxt(858, 770, 'Gas rate [Mscf/D]') + vtxt(841, 767, 'Rate') +
    rect(831, 879, 1449, 898, '#f6f6f6') + txt(926, 888, '◦') + txt(1426, 888, '◦') +
    poly('943,826 943,797 955,797 955,768 968,768 968,739 981,739 981,710 994,710 994,826 1026,826 1026,748 1180,748 1180,826 1410,826', c, .9) + poly('1180,826 1410,826', kind === 4 ? '#7a1a60' : '#4a2a70', .9);
  if (kind === 9) s += labelsY([[607, '2000'], [646, '1000'], [685, '0']], 907) + vtxt(841, 633, 'Pressure') + vtxt(859, 635, 'Pressure [psia]') +
    poly('943,575 943,618 955,621', '#2563a8', 1.2) + poly('955,692 997,692', '#2563a8', 1.4) + poly('1000,577 1026,577', '#2563a8', 1.4) + poly('1026,692 1180,692', '#2563a8', 1.4) + poly('1183,577 1410,577', '#14408c', 1.2) +
    dots('955,630 955,652 997,645 997,615 998,600 999,585 1026,600 1026,630 1026,650 1026,672 1181,590 1181,610 1181,630 1181,672', '#2563a8', .6);
  if (kind === 4) s += curve('1060,660 1120,664 1180,667', '#8a1a50', 1.1) + poly('1180,667 1180,605', '#6a1a60', 1) + curve('1180,605 1190,595 1230,589 1300,585 1410,582', '#5a1a70', 1.2);
  if (kind === 2) s += curve('1190,592 1230,588 1300,584 1410,582', '#24289c', 1.3);
  return plot(HISTBOX, s);
}

/* ---------- windows inside the workspace ---------- */
const strip = (n, cls = '') => `<ul class="strip ${cls}">${['mag', 'hand', 'mag', 'arrows', 'vred', 'hred', 'sq', 'sq2', 'copy', 'pin', 'ball', 'undo', 'redo', 'mag', 'globe', 'page'].filter((v, i) => n !== 15 || i !== 10).slice(0, n).map(i => `<li>${ic(i)}</li>`).join('')}</ul>`;
const pane = (cls, title, body, tools) => `<section class="pane ${cls}"><header>${title}<span class="ctl">${ic('help')}${ic('copy')}${ic('sq2')}</span></header><div class="view"><div class="canvas">${body}</div>${tools}</div></section>`;
const facts = (cls, lines) => `<section class="pane info ${cls}"><header>Standard Gas Analysis</header><div>${lines}<span class="warn">Some default values were used</span></div></section>`;
const quad = (kind, logPlot, info) => `<div class="quad">${pane('log' + (kind === 4 ? ' active' : ''), 'Loglog plot', logPlot, strip(12))}${info}${pane('semi' + (kind === 9 ? ' active' : ''), 'Semilog plot', semiSmall(kind), strip(11))}${pane('hist', kind === 9 ? 'History plot' : '<span></span>', hist(kind), strip(11, kind === 4 ? 'faded' : ''))}</div>`;
const dl = rows => `<dl>${rows.map(r => r.length === 1 ? `<dt class="head">${r[0]}</dt>` : `<dt>${r[0]}</dt><dd>${r[1]}</dd>`).join('')}</dl>`;
const modelRows = [['qref', '8000.00 Mscf/D'], ['Δt extract', '0.00000 hr'], ['P @ dt=0', '2883.70 psia'], ['PI', '47.4583 [Mscf/D]/psia'], ['PI (last P)', '43.2711 [Mscf/D]/psia'], ['TM', '3282.53 1/hr'], ['PM', '0.0603155 1/psia'], ['C', '0.0110018 bbl/psi'], ['kh', '2486.14 md.ft'], ['k', '49.7228 md'], ['k/µ', '2447.74 md/cp'], ['kh/µ', '1.22387E+5 [md.ft]/cp'], ['Skin', '4.93810'], ['ΔP skin', '71.2410 psi'], ['L', '509.941 ft'], ['Model description'], ['Active model', 'Analytical'], ['Wellbore', 'Constant'], ['Well', 'Slanted'], ['Reservoir', 'Homogeneous'], ['Boundary', 'Fault'], ['Other wells incl.?', 'No'], ['Rate dep. skin?', 'No'], ['Time dep. skin?', 'No'], ['Model -&nbsp; Well &amp; wellbore'], ['Wellbore model', 'Constant'], ['C', '0.00990837 bbl/psi'], ['Well', 'Slanted'], ['Skin', '4.93096'], ['hw', '50.0000 ft'], ['Zw', '25.0000 ft']];

/* ---------- dialogs ---------- */
const chk = (t, attr = '', cls = '') => `<label class="${cls || (attr.includes('disabled') ? 'off' : '')}"><input type="checkbox" ${attr}>${t}</label>`;
const push = (t, cls = '', attr = '') => `<button class="push ${cls}" ${attr}>${t}</button>`;
const head = t => `<header><h3>${t}</h3><button>?</button><button>×</button></header>`;
const sec = (t, body = '') => `<section><h3>${t}<span>${body ? '⌃' : '⌄'}</span></h3>${body ? `<div>${body}</div>` : ''}</section>`;
const prow = r => `<tr class="${r[0]}"><td></td><td>${r[1] || '&nbsp;'}</td><td>${r[2] || ''}</td><td>${r[2] ? '▾' : ''}</td></tr>`;
function design(t2) {
  const rows = t2
    ? [['pale'], ['', '0.01', 'bbl/psi'], ['', '10.0000'], ['', '1.00000', 'hr'], ['', '0.00000'], ['band'], ['', '3000.00', 'psia'], ['', '2500.00', 'md.ft'], ['', '50.0000', 'md'], ['', '30.0000', 'ft'], ['', '0.2'], ['', 'No flow &nbsp; ▾ &nbsp; 500.000', 'ft'], ['', '3.0029E-4', 'psi⁻¹']]
    : [['band'], ['', '0.0000E-3', 'bbl/psi'], ['', '0.0000'], ['band'], ['', '3000.00', 'psia'], ['', '2500.00', 'md.ft'], ['', '50.0000', 'md'], ['strong', '30.0000', 'ft'], [''], ['', 'No flow &nbsp; ▾ &nbsp; 500.000', 'ft'], ['', '3.0029E-4', 'psi⁻¹']];
  const R = h => `<div class="row">${h}</div>`;
  return `<div class="dialog design back">${head('Generate analytical test design')}<button class="vtab">Standard models</button>
  <div class="cols"><div class="models">
    ${sec('Main options:', R(chk('Include other wells', 'disabled').replace('</label>', ic('gear') + '</label>')) + R(chk('Impose pi', 'checked disabled') + chk(t2 ? 'External m' : '', 'disabled aria-label="External model"', 'off second')))}
    ${sec(t2 ? 'Wellbore model [Changing hegeman]' : 'Wellbore model [Constant]', R(sel(t2 ? 'Changing hegeman' : 'Constant', 'Wellbore model') + (t2 ? ic('table') : '')) + R(chk('Use well intake', 'disabled') + (t2 ? '' : chk('DST m'))))}
    ${sec('Well model [Vertical]', R(sel('Vertical', 'Well model')) + R(chk('Rate dependent skin') + (t2 ? chk('Time dependent s') : chk('Time', 'disabled'))))}
    ${t2 ? sec('Reservoir model [Homogeneous]') + sec('Boundary model [Fault]') : sec('Reservoir model [Homogeneous]', R(sel('Homogeneous', 'Reservoir model')) + R(chk('Horizontal anisotropy'))) + sec('Boundary model [Fault]', R(sel('Fault', 'Boundary model')) + R(chk('Material balance', 'disabled')))}
    ${sec('Time stepping')}
  </div><div class="params"><button>Parameters</button><div class="sheetbox">
    ${R(`Show ${sel('All', 'Show')}${ic('funnel')}<input type="text" aria-label="Filter" disabled>${chk('Show short names')}${ic('copyred')}`)}
    <table class="${t2 ? 'thirteen' : 'eleven'}"><colgroup><col class="c-name"><col><col class="c-unit"><col class="c-drop"></colgroup>${rows.map(prow).join('')}</table>
  </div></div></div>
  <footer>${ic('recycle')}${ic('cam')}${push('History', t2 ? '' : 'hot')}${push('Gauge', t2 ? 'hot' : '')}<span class="gap"></span>${push('Generate', '', t2 ? '' : 'disabled')}${push('Cancel')}</footer></div>`;
}
const history = `<div class="dialog history">${head('Test design history')}<div class="row">${chk('Oil', 'disabled')}${chk('Gas', 'checked disabled')}${chk('Water', 'disabled')}</div>
  <div class="grid2"><div class="box"><table><thead><tr><th></th><th>Duration</th><th>Gas rate</th></tr></thead><tbody><tr class="units"><th></th><td>hr</td><td>MMscf/D</td></tr>
  ${[['1', '4.00000', '3.00000'], ['I 2', '4.00000', '6'], ['3', '4.00000', 'N/A'], ['4', '4.00000', 'N/A'], ['5', '10.0000', 'N/A'], ['6', '48.0000', 'N/A'], ['7', '72.0000', 'N/A']].map((r, i) => `<tr><th>${r[0]}</th><td>${r[1]}</td><td class="${i === 1 ? 'edit' : ''}">${r[2]}</td></tr>`).join('')}</tbody></table></div>
  <div class="col">${['Add', 'Insert', 'Delete', 'Load'].map(t => push(t)).join('')}</div></div><footer>${push('OK', 'hot')}${push('Cancel')}</footer></div>`;
const field = (id, t, v, u, attr = '') => `<label for="${id}" class="${attr ? 'off' : ''}">${t}</label><input type="text" id="${id}" value="${v}" ${attr}><span>${u}</span>`;
const gauge = `<div class="dialog gauge">${head('Pressure gauge properties')}<div class="fields">
  <label for="gn">Name</label><input type="text" class="name" id="gn" value="Changing WS"><label for="gt">Type</label><select id="gt"><option>Ideal</option></select><span></span>
  ${field('gr', 'Resolution', '0.00000', 'psia')}${field('gd', 'Drift', '0.00000', '1/hr')}${field('gz', 'Noise', '0.00000', 'psia')}
  <label class="tick"><input type="checkbox">Include tidal effects</label>
  ${field('ga', 'Amplitude', '0.1', 'psia', 'disabled')}${field('gp', 'Period', '12.4200', 'hr', 'disabled')}${field('go', 'Offset', '0.00000', 'hr', 'disabled')}</div>
  <footer>${push('OK')}${push('Cancel')}</footer></div>`;
const average = `<div class="dialog average">${head('Average pressure')}<div class="row calc"><label for="cm">Calculation method</label><select id="cm"><option>Material balance</option></select>${push('Plot')}</div>
  <fieldset><legend>Parameters</legend><div class="inner"><div class="box"><table><colgroup><col class="c-name"><col class="c-val"><col><col class="c-drop"></colgroup>
  ${[['pale', 'Well'], ['', 'Cumulative', '12500.0', 'scf'], ['band', 'Reservoir'], ['', 'Initial pressure', '3000.00', 'psia'], ['', 'Drainage area', '100.000', 'acre'], ['', 'Porosity', '0.1', ''], ['', 'Reservoir thickness', '30.0000', 'ft']].map(r => `<tr class="${r[0]}"><th>${r[1]}</th><td>${r[2] || ''}</td><td>${r[3] || ''}</td><td>${r[3] ? '▾' : ''}</td></tr>`).join('')}</table></div>
  <div class="acts"><p>Parameters from analysis<button>${ic('refresh')}</button></p><p>Shape factor from catalog<button>${ic('page')}</button></p><p>Compute drainage area<button>${ic('calc')}</button></p><p>Compute Cumul<button>${ic('calc')}</button></p>
  <div class="out"><label for="ap">Average pressure:</label><span class="row"><input type="text" id="ap" value="3000.00" disabled>psia</span></div></div></div></fieldset>
  <footer>${push('Compute')}${push('OK', 'hot')}${push('Cancel')}</footer></div>`;

/* ---------- shots ---------- */
const fullPane = (title, active, body, n) => pane('full ' + (active ? 'active' : ''), title, body, strip(n));
const gasFacts = a => a.join('\n') + '\n';
const SHOTS = [
  { tab: 3, dim: 1, off: [2, 3, 4, 5, 6, 7, 8], ribbon: toolsRibbon(true), desk: '', over: design(false) + history, status: ['RAM used 679 MB - Free 32096 MB'], w: '87°F\nMostly cloudy', t: '4:29 PM' },
  { tab: 3, dim: 1, off: [6, 7, 8], ribbon: toolsRibbon(false), desk: quad(2, logSmall(2), facts('', gasFacts(['Δt extract = 0.00000 hr', 'Pi = 3000.00 psia', 'kh = 2500.00 md.ft', 'k = 50.0000 md', 'C = 0.01 bbl/psi', 'Skin = -0.006102']))), over: design(true) + gauge, status: ['RAM used 730 MB - Free 32122 MB'], w: '87°F\nMostly cloudy', t: '4:34 PM' },
  { tab: 4, off: [], ribbon: loglogRibbon('', 0), desk: fullPane('Loglog plot', 0, plot3, 15), status: ['RAM used 779 MB - Free 32068 MB'], w: '87°F\nMostly cloudy', t: '4:39 PM' },
  { tab: 3, dim: 1, off: [], ribbon: toolsRibbon(false), desk: quad(4, logSmall(4), facts('tall', gasFacts(['Analytical', '', 'Wellbore = Constant', 'Well = Vertical', 'Reservoir = Homogeneous', 'Boundary = Fault', '', 'Pi = 3000.00 psia', 'kh = 2500.00 md.ft', 'k = 50.0000 md', 'C = 0.01 bbl/psi', 'Skin = 0.00000', 'L = 500.000 ft']))), over: average, status: ['RAM used 790 MB - Free 32069 MB'], w: '87°F\nMostly cloudy', t: '4:43 PM' },
  { tab: 4, off: [], ribbon: iprRibbon, desk: fullPane('IPR plot - Vertical - C &amp; n', 1, plot5 + `<div class="readout ipr">IPR plot - Vertical - C &amp; n${dl([['AOF', '2.61979E+5 Mscf/D'], ['C', '4.51817E-4 [Mscf/D]/[psi²/cp]'], ['n', '1.00000']])}</div>`, 16), status: ['RAM used 796 MB - Free 32066 MB'], w: '87°F\nPartly sunny', t: '4:49 PM' },
  { tab: 4, off: [], ribbon: sensRibbon, desk: fullPane('Sensitivity loglog plot', 1, plot6 + `<ul class="readout legend">${[['blue', 'Skin = -5.00000'], ['wine', 'Skin = 0.00000'], ['red', 'Skin = 5.00000'], ['green', 'Current model'], ['black', 'Current model derivative'], ['green', 'Data'], ['red', 'Data derivative']].map(([c, t], i) => `<li class="${c}">${i < 5 ? '<i></i>' : i === 5 ? '×' : '○'}<span>${t}</span></li>`).join('')}</ul>`, 15), status: ['Time = 0.988688 hr | Normalized gas potential = 15.8338 psi', 'RAM used 478 MB - Free 32568 MB'], w: '79°F\nPartly cloudy', t: '8:30 PM', late: 1 },
  { tab: 4, off: [6, 7, 8], ribbon: semiRibbon, desk: fullPane('Semilog plot', 1, plot7 + `<div class="readout semi">Build-Up #2 Semilog line${dl([['T start', '0.0252201 hr'], ['T end', '6.82731 hr'], ['Slope', '16.9188 psi'], ['Intercept', '2994.61 psia'], ['P at 1 hr', '2964.32 psia'], ['P at 1 hr raw', '2964.54 psia'], ['P end of radial', '2977.75 psia'], ['P Match', '0.0680681 1/psia'], ['kh', '2441.40 md.ft'], ['k', '48.8280 md'], ['P*', '2999.75 psia'], ['Skin', '4.69702'], ['ΔP Skin', '41.4161 psi']])}</div>`, 16), status: ['Superposition time = -3.38138 &nbsp;| Real time = 74.0252 hr | Local time = 4/16/2025 2:01:30 AM | Normalized gas potential = 2937.12 psia', 'RAM used 530 MB - Free 32633 MB'], w: '79°F\nPartly cloudy', t: '8:35 PM', late: 1 },
  { tab: 4, off: [], ribbon: loglogRibbon('hot', 1), desk: fullPane('Loglog plot', 1, plot8 + `<div class="readout model">${dl(modelRows)}</div>`, 15), status: ['Time = 0.00117132 hr | Normalized gas potential = 43.5798 psi', 'RAM used 620 MB - Free 32520 MB'], w: 'Low visibility\nNow', t: '8:40 PM', late: 1 },
  { tab: 3, off: [6, 7, 8], ribbon: toolsRibbon(false), desk: quad(9, log9, facts('', gasFacts(['Δt extract = 0.00000 hr', 'Pi = 3000.00 psia', 'kh = 2486.14 md.ft', 'k = 49.7228 md', 'C = 0.0110018 bbl/psi', 'Skin = -7.10412', 'L = 509.941 ft']))), status: ['Time = 3421.24 hr | Normalized gas potential = 6600.08 psi', 'RAM used 687 MB - Free 32403 MB'], w: '79°F\nPartly cloudy', t: '8:43 PM', late: 1 }
];
const TABS = [['PVA / QAQC', 30], ['Reference logs', 34], ['Map', 18], ['Additional tools', 29], ['Analysis', 21], ['Window', 24]];
const shot = s => `<article class="shot"><div class="app">
  <div class="titlebar"><svg class="logo" viewBox="0 0 16 16" aria-hidden="true">${ICONS.heart}</svg><h2 class="${s.dim ? 'dim' : ''}">Udemy - Part 2 - <b>KAPPA Workstation v5.40.05 – Saphir module - Pressure Transient Analysis</b></h2>
    <button class="winbtn">⤫</button><button class="winbtn">–</button><button class="winbtn">❐</button><button class="winbtn">×</button></div>
  <nav class="tabs"><button class="file">File</button>${TABS.map(([t, w], i) => `<button class="${i === s.tab ? 'on' : ''}" style="width:${w}px">${t}</button>`).join('')}<span class="quick">${['help', 'chart', 'mag', 'save'].map(ic).join('')}<span>–</span><span>❐</span><span>×</span></span></nav>
  <div class="ribbon">${s.ribbon}<span class="collapse">⌃</span></div>
  <div class="body"><aside class="side"><header>«</header><ul>${side(s.off)}</ul></aside>
    <div class="work"><div class="docs"><button>Analysis 1</button><span>✦ New &nbsp;▾</span></div><div class="desk">${s.desk}</div><div class="footline"></div></div></div>
  <div class="status">${s.status.map(t => `<span>${t}</span>`).join('')}<meter value="0" aria-label="Memory"></meter></div>
  <footer class="taskbar"><div class="weather">${ic('weather')}<span>${s.w}</span></div><svg class="start" viewBox="0 0 16 16" aria-hidden="true">${ICONS.win}</svg>
    <div class="find">${ic('search')}<input type="text" placeholder="Search" aria-label="Search"></div>
    <ul class="pins">${['desk2', 'folder', 'pdf', 'pdf', 'chrome', 'spotify'].concat(s.late ? ['kappa', 'saphir', 'obs'] : ['obs', 'kappa', 'saphir']).map(i => `<li>${ic(i)}</li>`).join('')}</ul>
    <div class="tray">${['up', 'shield', 'mic', 'wifi', 'vol', 'bat'].map(ic).join('')}<time>${s.t}\n4/13/2025</time>${ic('bell')}</div></footer>
  ${s.over || ''}</div><span class="brand">ûdemy</span></article>`;
document.getElementById('sheet').innerHTML = SHOTS.map(shot).join('');
```
